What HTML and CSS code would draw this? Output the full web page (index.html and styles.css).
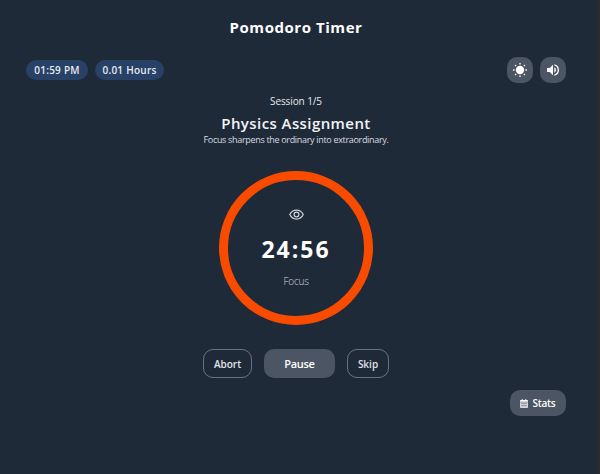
FILE: index.html
```
<!DOCTYPE html>
<html lang="en">
<head>
<meta charset="utf-8">
<title>Pomodoro Timer</title>
<link rel="stylesheet" href="styles.css">
</head>
<body>
<main class="app">
  <h1 class="title">Pomodoro Timer</h1>
  <header class="bar">
    <div class="pills"><span class="pill clock"><span>01:59 PM</span></span><span class="pill hours"><span>0.01 Hours</span></span></div>
    <div class="tools">
      <button class="tool" aria-label="Theme"><svg width="16" height="16" viewBox="0 0 16 16"><circle cx="8" cy="8" r="4.2" fill="#fff"/><path d="M8 1v1.500M8 13.500V15M1 8h1.500M13.500 8H15M3.050 3.050l1 1M11.950 11.950l1 1M3.050 12.950l1-1M11.950 4.050l1-1" stroke="#fff" stroke-width="1.3"/></svg></button>
      <button class="tool" aria-label="Sound"><svg width="16" height="16" viewBox="0 0 24 24" fill="#fff"><path d="M3 9v6h4l5 5V4L7 9H3zm13.500 3A4.500 4.500 0 0 0 14 7.970v8.050A4.480 4.480 0 0 0 16.500 12zM14 3.230v2.060a7 7 0 0 1 0 13.420v2.060A9 9 0 0 0 14 3.230z"/></svg></button>
    </div>
  </header>
  <section class="session">
    <p class="count">Session 1/5</p>
    <h2 class="task">Physics Assignment</h2>
    <p class="quote">Focus sharpens the ordinary into extraordinary.</p>
    <div class="ring">
      <svg class="eye" width="15" height="11" viewBox="0 0 15 11" fill="none" stroke="#c9ced6" stroke-width="1.25"><path d="M.8 5.500C2.200 2.500 4.700 1 7.500 1s5.300 1.500 6.700 4.500C12.800 8.500 10.300 10 7.500 10S2.200 8.500.8 5.500z"/><circle cx="7.500" cy="5.500" r="2.400"/></svg>
      <div class="time">24:56</div>
      <div class="mode">Focus</div>
    </div>
    <div class="actions">
      <button class="btn abort">Abort</button><button class="btn pause">Pause</button><button class="btn skip">Skip</button>
    </div>
  </section>
  <footer class="foot">
    <button class="stats"><svg width="8" height="9" viewBox="0 0 9 10"><path d="M2 0h1v1h3V0h1v1h1q1 0 1 1v1H0V2q0-1 1-1h1z" fill="#fff"/><path d="M0 3.700h9V9q0 1-1 1H1q-1 0-1-1z" fill="#d5d9df"/><path d="M1.700 5.200h1.200M3.900 5.200h1.200M6.100 5.200h1.200M1.700 7.500h1.200M3.900 7.500h1.200M6.100 7.500h1.200" stroke="#4b5563" stroke-width="1.100"/></svg><span>Stats</span></button>
  </footer>
</main>
</body>
</html>
```
FILE: styles.css
```
* { box-sizing: border-box; margin: 0; padding: 0; }
body {
  width: 600px;
  height: 474px;
  overflow: hidden;
  background: #2a2b2d;
  color: #fff;
  font-family: "Open Sans", "Noto Sans", sans-serif;
}
button { border: 0; color: inherit; font: inherit; }
svg { display: block; }
.app { width: 597px; height: 474px; padding: 17px 31px 0 26px; background: #1f2a39; }
.title { height: 20px; line-height: 20px; font-size: 15px; font-weight: 700; letter-spacing: .55px; text-align: center; white-space: nowrap; }
.bar { display: flex; justify-content: space-between; margin-top: 20px; }
.pills { display: flex; gap: 7px; padding-top: 3px; }
.pill {
  display: flex; align-items: center; justify-content: center;
  height: 20px; border-radius: 10px; background: #284166;
  color: #e5eaf1; font-size: 10px; font-weight: 600; letter-spacing: .25px; white-space: nowrap;
}
.clock { width: 62px; }
.hours { width: 69px; }
.tools { display: flex; gap: 7px; }
.tool { display: flex; align-items: center; justify-content: center; width: 26px; height: 26px; border-radius: 10px; background: #4b5563; }
.session { display: flex; flex-direction: column; align-items: center; white-space: nowrap; }
.count { margin-top: 10px; height: 16px; line-height: 16px; font-size: 10px; letter-spacing: -.1px; color: #e5e7eb; }
.task { margin-top: 4px; height: 20px; line-height: 20px; font-size: 15px; font-weight: 600; letter-spacing: .42px; color: #f3f4f6; }
.quote { margin-top: 1px; height: 12px; line-height: 12px; font-size: 9px; color: #d9dce1; letter-spacing: -.32px; }
.ring {
  display: flex; flex-direction: column; align-items: center;
  width: 154px; height: 154px; margin-top: 25px; padding-top: 29px;
  border: 9px solid #f84b00; border-radius: 50%;
}
.time { margin-top: 13px; height: 32px; line-height: 32px; font-size: 23px; font-weight: 700; letter-spacing: 2px; }
.mode { margin-top: 8px; height: 16px; line-height: 16px; font-size: 10px; font-weight: 300; letter-spacing: -.2px; color: #d0d5dc; }
.actions { display: flex; gap: 12px; margin-top: 24px; }
.btn { height: 29px; border-radius: 10px; background: transparent; font-size: 10px; font-weight: 600; color: #e0e3e8; }
.abort, .skip { border: 1px solid #6b7280; }
.abort { width: 49px; }
.pause { width: 71px; background: #4b5563; color: #fff; font-size: 11px; letter-spacing: -.3px; }
.skip { width: 42px; }
.foot { display: flex; justify-content: flex-end; margin-top: 12px; }
.stats { display: flex; align-items: center; justify-content: center; gap: 4px; width: 56px; height: 26px; border-radius: 10px; background: #4b5563; font-size: 10px; font-weight: 600; letter-spacing: -.2px; }
```
